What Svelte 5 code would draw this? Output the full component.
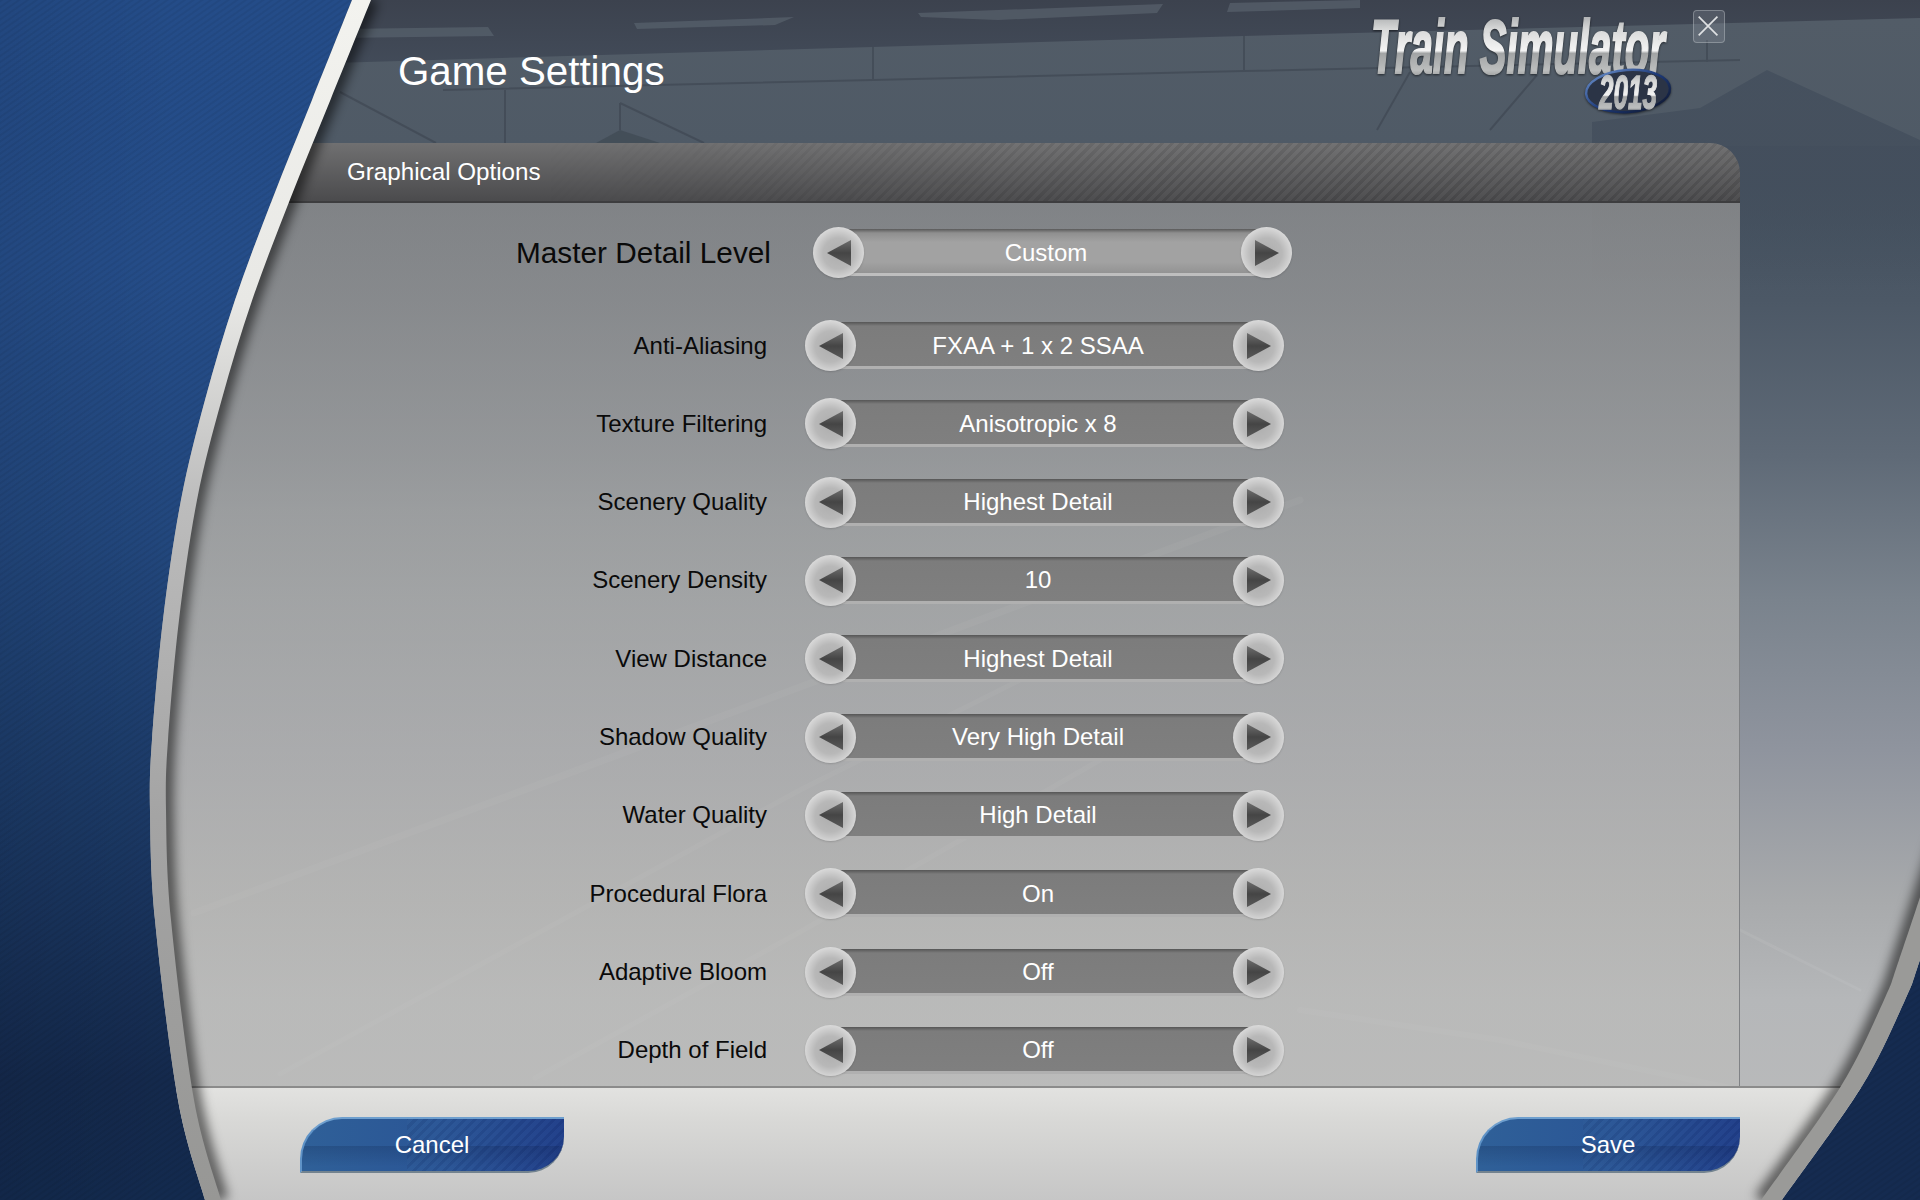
<script>
  const rows = [
    ['Anti-Aliasing', 'FXAA + 1 x 2 SSAA'],
    ['Texture Filtering', 'Anisotropic x 8'],
    ['Scenery Quality', 'Highest Detail'],
    ['Scenery Density', '10'],
    ['View Distance', 'Highest Detail'],
    ['Shadow Quality', 'Very High Detail'],
    ['Water Quality', 'High Detail'],
    ['Procedural Flora', 'On'],
    ['Adaptive Bloom', 'Off'],
    ['Depth of Field', 'Off']
  ];

  // Smooth curve through points (Catmull-Rom to Bezier)
  function curve(p) {
    let d = '';
    for (let i = 0; i < p.length - 1; i++) {
      const a = p[Math.max(i - 1, 0)], b = p[i], c = p[i + 1], e = p[Math.min(i + 2, p.length - 1)];
      const c1 = [b[0] + (c[0] - a[0]) / 6, b[1] + (c[1] - a[1]) / 6];
      const c2 = [c[0] - (e[0] - b[0]) / 6, c[1] - (e[1] - b[1]) / 6];
      d += `C${c1[0].toFixed(1)} ${c1[1].toFixed(1)} ${c2[0].toFixed(1)} ${c2[1].toFixed(1)} ${c[0]} ${c[1]}`;
    }
    return d;
  }
  const leftOuter = [[352,0],[312,100],[272,200],[235,300],[205,400],[181,500],[163,620],[152,740],[150,810],[155,920],[178,1100],[205,1200]];
  const leftInner = leftOuter.map(([x, y]) => [x + 19 - 3 * Math.min(y / 500, 1), y]);
  const rightOuter = [[1960,840],[1920,960],[1905,1000],[1862,1086],[1782,1200]];
  const rightInner = rightOuter.map(([x, y]) => [x - 21, y]);
  const start = (p) => `M${p[0][0]} ${p[0][1]}`;
  const rev = (p) => [...p].reverse();

  const blueLeft = `${start(leftOuter)}${curve(leftOuter)}L0 1200L0 0Z`;
  const blueRight = `${start(rightOuter)}${curve(rightOuter)}L1960 1200Z`;
  const bandLeft = `${start(leftOuter)}${curve(leftOuter)}L${rev(leftInner)[0].join(' ')}${curve(rev(leftInner))}Z`;
  const bandRight = `${start(rightOuter)}${curve(rightOuter)}L${rev(rightInner)[0].join(' ')}${curve(rev(rightInner))}Z`;
  const shadeLeft = `${start(leftInner)}${curve(leftInner)}`;
  const shadeRight = `${start(rightInner)}${curve(rightInner)}`;
</script>

<div class="screen">
  <!-- ghosted station photograph behind the panel -->
  <svg class="layer backdrop" viewBox="0 0 1920 1200" aria-hidden="true">
    <defs>
      <linearGradient id="sky" x1="0" y1="0" x2="0" y2="1">
        <stop offset="0" stop-color="#3c424e" />
        <stop offset="0.09" stop-color="#465160" />
        <stop offset="0.17" stop-color="#455260" />
        <stop offset="0.25" stop-color="#4c5866" />
        <stop offset="0.38" stop-color="#5f6a77" />
        <stop offset="0.5" stop-color="#7a838d" />
        <stop offset="0.625" stop-color="#8f949e" />
        <stop offset="0.75" stop-color="#a8aaac" />
        <stop offset="0.833" stop-color="#b5b7b9" />
        <stop offset="1" stop-color="#bcbcbc" />
      </linearGradient>
      <linearGradient id="house" x1="0" y1="0" x2="0" y2="1">
        <stop offset="0" stop-color="#434e5c" />
        <stop offset="0.5" stop-color="#434e5c" />
        <stop offset="1" stop-color="#434e5c" stop-opacity="0" />
      </linearGradient>
      <linearGradient id="wall" x1="0" y1="0" x2="0" y2="1">
        <stop offset="0" stop-color="#525c67" />
        <stop offset="1" stop-color="#4f5a66" />
      </linearGradient>
    </defs>
    <rect width="1920" height="1200" fill="url(#sky)" />
    <polygon points="300,64 873,47 1244,36 1920,18 1920,146 300,146" fill="url(#wall)" />
    <polygon points="1592,122 1700,108 1767,70 1920,140 1920,290 1592,290" fill="url(#house)" opacity="0.8" />
    <g fill="#59626d" opacity="0.7">
      <polygon points="634,23 794,17 775,25 637,29" />
      <polygon points="918,13 1163,4 1157,13 998,20 921,17" />
      <polygon points="1230,3 1360,0 1360,8 1227,12" />
      <polygon points="340,29 488,27 494,36 340,38" />
    </g>
    <polygon points="596,143 620,130 660,143" fill="#3f4853" opacity="0.7" />
    <g stroke="#343b46" stroke-width="2" fill="none" opacity="0.42">
      <path d="M443 90L873 80L1244 71L1740 60" />
      <path d="M873 47V80M1244 36V71M1707 40V62M505 90V143M620 103V130" />
      <path d="M620 103L704 143M340 92L436 143M1377 130L1410 72M1490 130L1537 75" />
    </g>
    <g stroke="#ffffff" fill="none" opacity="0.06" stroke-linecap="round">
      <path d="M194 913L800 687L1300 500" stroke-width="7" />
      <path d="M280 1074L800 790L1060 660" stroke-width="5" />
      <path d="M535 1078L800 932L1100 760" stroke-width="5" />
      <path d="M1300 1010L1500 1040L1740 1090" stroke-width="6" />
      <path d="M1740 930L1860 990" stroke-width="3" />
    </g>
  </svg>

  <div class="page">
    <header class="top">
      <h1>Game Settings</h1>
      <svg class="logo" viewBox="0 0 312 110" role="img" aria-label="Train Simulator 2013">
        <defs>
          <linearGradient id="chrome" x1="0" y1="0" x2="0" y2="1">
            <stop offset="0" stop-color="#8b8e90" />
            <stop offset="0.3" stop-color="#d8d9d9" />
            <stop offset="0.55" stop-color="#f4f4f4" />
            <stop offset="0.58" stop-color="#a2a4a5" />
            <stop offset="0.78" stop-color="#bcbebe" />
            <stop offset="1" stop-color="#5f6163" />
          </linearGradient>
          <linearGradient id="ring" x1="0" y1="0" x2="1" y2="1">
            <stop offset="0" stop-color="#6f95d0" />
            <stop offset="0.5" stop-color="#1d3a7a" />
            <stop offset="1" stop-color="#0e1426" />
          </linearGradient>
        </defs>
        <text class="logo-main" x="5" y="59" textLength="294" lengthAdjust="spacingAndGlyphs" fill="url(#chrome)" stroke="url(#chrome)">Train Simulator</text>
        <ellipse cx="262" cy="77" rx="42" ry="21" fill="#2b3446" stroke="url(#ring)" stroke-width="2.5" transform="rotate(-4 262 77)" />
        <text class="logo-year" x="233" y="95" textLength="58" lengthAdjust="spacingAndGlyphs" fill="url(#chrome)" stroke="url(#chrome)">2013</text>
      </svg>
      <button class="close" aria-label="Close">
        <svg viewBox="0 0 32 32" width="30" height="30"><path d="M5 5L25 25M25 5L5 25" stroke="#dfe1e3" stroke-width="1.8" fill="none" /></svg>
      </button>
    </header>

    <section class="settings">
      <div class="bar"><h2>Graphical Options</h2></div>
      <div class="panel">
        <div class="row master">
          <span class="label">Master Detail Level</span>
          <div class="picker">
            <button class="arrow" aria-label="Previous">
              <svg viewBox="0 0 24 26" width="24" height="26"><polygon points="0,13 24,0 24,26" fill="url(#tri)" /></svg>
            </button>
            <div class="track"><span>Custom</span></div>
            <button class="arrow" aria-label="Next">
              <svg viewBox="0 0 24 26" width="24" height="26"><polygon points="24,13 0,0 0,26" fill="url(#tri)" /></svg>
            </button>
          </div>
        </div>
        <div class="list">
          {#each rows as [label, value]}
            <div class="row">
              <span class="label">{label}</span>
              <div class="picker">
                <button class="arrow" aria-label="Previous">
                  <svg viewBox="0 0 24 26" width="24" height="26"><polygon points="0,13 24,0 24,26" fill="url(#tri)" /></svg>
                </button>
                <div class="track"><span>{value}</span></div>
                <button class="arrow" aria-label="Next">
                  <svg viewBox="0 0 24 26" width="24" height="26"><polygon points="24,13 0,0 0,26" fill="url(#tri)" /></svg>
                </button>
              </div>
            </div>
          {/each}
        </div>
      </div>
    </section>

    <footer class="bottom">
      <button class="action">Cancel</button>
      <button class="action">Save</button>
    </footer>
  </div>

  <!-- curved blue frame lying over the page -->
  <svg class="layer frame" viewBox="0 0 1920 1200" aria-hidden="true">
    <defs>
      <linearGradient id="tri" x1="0" y1="0" x2="0" y2="1">
        <stop offset="0" stop-color="#6e6e6e" />
        <stop offset="0.5" stop-color="#454545" />
        <stop offset="1" stop-color="#5a5a5a" />
      </linearGradient>
      <linearGradient id="blue" x1="0" y1="0" x2="0" y2="1">
        <stop offset="0" stop-color="#244c88" />
        <stop offset="0.22" stop-color="#254d89" />
        <stop offset="0.45" stop-color="#22477d" />
        <stop offset="0.68" stop-color="#1b3965" />
        <stop offset="0.9" stop-color="#14294c" />
        <stop offset="1" stop-color="#132a4e" />
      </linearGradient>
      <linearGradient id="blueSide" x1="0" y1="0" x2="1" y2="0">
        <stop offset="0" stop-color="#000" stop-opacity="0.07" />
        <stop offset="0.5" stop-color="#000" stop-opacity="0" />
      </linearGradient>
      <linearGradient id="band" gradientUnits="userSpaceOnUse" x1="0" y1="0" x2="0" y2="1200">
        <stop offset="0" stop-color="#f3f3ef" />
        <stop offset="0.25" stop-color="#e8e8e5" />
        <stop offset="0.42" stop-color="#bcbcbc" />
        <stop offset="0.68" stop-color="#a4a4a4" />
        <stop offset="1" stop-color="#979795" />
      </linearGradient>
      <pattern id="hatch" width="5" height="5" patternUnits="userSpaceOnUse" patternTransform="rotate(-35)">
        <rect width="5" height="2" fill="#000" opacity="0.055" />
      </pattern>
      <filter id="soft" x="-10%" y="-10%" width="120%" height="120%">
        <feGaussianBlur stdDeviation="6" />
      </filter>
    </defs>
    <g filter="url(#soft)" fill="none" stroke="#000" stroke-opacity="0.6" stroke-width="14">
      <path d={shadeLeft} />
      <path d={shadeRight} />
    </g>
    <path d={blueLeft} fill="url(#blue)" />
    <path d={blueLeft} fill="url(#blueSide)" />
    <path d={blueLeft} fill="url(#hatch)" />
    <path d={blueRight} fill="#152b50" />
    <path d={blueRight} fill="url(#hatch)" />
    <path d={bandLeft} fill="url(#band)" />
    <path d={bandRight} fill="#9a9a98" />
  </svg>
</div>

<style>
  :global(body) {
    margin: 0;
    background: #000;
  }
  .screen {
    position: relative;
    width: 1920px;
    height: 1200px;
    overflow: hidden;
    font-family: "Liberation Sans", Arial, sans-serif;
  }
  .layer {
    position: absolute;
    inset: 0;
    width: 1920px;
    height: 1200px;
    display: block;
  }
  .frame {
    pointer-events: none;
  }
  .page {
    position: relative;
    display: flex;
    flex-direction: column;
    height: 1200px;
  }
  .top {
    display: flex;
    align-items: flex-start;
    height: 143px;
    padding: 0 195px 0 398px;
    box-sizing: border-box;
    flex: none;
  }
  h1 {
    margin: 49px auto 0 0;
    font-size: 40.3px;
    line-height: 46px;
    font-weight: 400;
    color: #fff;
  }
  .logo {
    width: 312px;
    height: 110px;
    margin-top: 14px;
    overflow: visible;
    filter: drop-shadow(0 1px 1px rgba(0, 0, 0, 0.55));
  }
  .logo-main {
    font: italic 700 76px "Liberation Sans", Arial, sans-serif;
    stroke-width: 2.2px;
  }
  .logo-year {
    font: italic 700 48px "Liberation Sans", Arial, sans-serif;
    stroke-width: 1.4px;
  }
  .close {
    width: 32px;
    height: 33px;
    margin: 10px 0 0 15px;
    padding: 0;
    flex: none;
    box-sizing: border-box;
    display: flex;
    align-items: center;
    justify-content: center;
    background: rgba(170, 176, 184, 0.2);
    border: 1px solid rgba(190, 195, 200, 0.42);
    border-radius: 4px;
  }
  .settings {
    margin-left: 130px;
    width: 1610px;
    flex: none;
  }
  .bar {
    position: relative;
    height: 60px;
    box-sizing: border-box;
    border-top-right-radius: 30px;
    border-bottom: 2px solid #3d3d3f;
    background: linear-gradient(#707071, #4b4b4d);
    overflow: hidden;
  }
  .bar::after {
    content: "";
    position: absolute;
    inset: 0;
    background: repeating-linear-gradient(-45deg, rgba(0, 0, 0, 0.07) 0 3px, rgba(255, 255, 255, 0.02) 3px 7px);
    -webkit-mask-image: linear-gradient(to right, transparent 25%, #000 65%);
    mask-image: linear-gradient(to right, transparent 25%, #000 65%);
  }
  h2 {
    margin: 0;
    padding-left: 217px;
    font-size: 24.2px;
    line-height: 58px;
    font-weight: 400;
    color: #fff;
  }
  .panel {
    height: 883px;
    box-sizing: border-box;
    padding-top: 24px;
    border-right: 1px solid #808285;
    background: linear-gradient(rgba(168, 164, 160, 0.6), rgba(188, 185, 180, 0.6) 35%, rgba(188, 188, 186, 0.6));
  }
  .row {
    display: grid;
    grid-template-columns: 637px 479px;
    column-gap: 38px;
    align-items: center;
    height: 51px;
  }
  .row.master {
    grid-template-columns: 641px 479px;
    column-gap: 42px;
  }
  .label {
    text-align: right;
    font-size: 24px;
    color: #0a0a0a;
  }
  .master .label {
    font-size: 29.8px;
  }
  .list {
    display: flex;
    flex-direction: column;
    gap: 27.33px;
    margin-top: 42px;
  }
  .picker {
    display: flex;
    align-items: center;
    height: 51px;
  }
  .arrow {
    position: relative;
    z-index: 1;
    flex: none;
    width: 51px;
    height: 51px;
    padding: 0;
    border: 0;
    border-radius: 50%;
    display: flex;
    align-items: center;
    justify-content: center;
    background: radial-gradient(circle at 50% 52%, #adadad 0, #b8b8b8 42%, #dadada 72%, #f6f6f6 92%, #d6d6d6 100%);
    box-shadow: 0 1px 2px rgba(0, 0, 0, 0.15);
  }
  .track {
    flex: 1;
    margin: 0 -25px;
    height: 47px;
    box-sizing: border-box;
    border-bottom: 3px solid #b0b0b0;
    background: linear-gradient(#565656, #7c7c7c 4px, #7f7f7f);
    display: flex;
    align-items: center;
    justify-content: center;
    color: #fff;
    font-size: 24px;
    padding: 3px 13px 0 0;
  }
  .master .track {
    background: linear-gradient(#5a5a5a, #8f8f8f 4px, #a2a2a2 30%, #a2a2a2 75%, #939393);
    border-bottom-color: #bebebe;
  }
  .bottom {
    flex: 1;
    display: flex;
    justify-content: space-between;
    align-items: flex-start;
    padding: 29px 180px 0 300px;
    border-top: 2px solid #8b8b8b;
    background: linear-gradient(#e2e2e0, #d8d8d6 30%, #c6c6c6);
  }
  .action {
    position: relative;
    width: 264px;
    height: 56px;
    padding: 0 2px 0 0;
    box-sizing: border-box;
    border: 0;
    border-top: 2px solid #6e9fce;
    border-left: 2px solid #5f93c7;
    border-bottom: 2px solid #73838f;
    border-radius: 42px 0 36px 0;
    background:
      repeating-linear-gradient(-45deg, rgba(0, 0, 40, 0.07) 0 3px, rgba(255, 255, 255, 0.01) 3px 7px) right / 60% 100% no-repeat,
      linear-gradient(transparent 52%, rgba(0, 10, 40, 0.16) 52%, rgba(0, 10, 40, 0) 92%),
      linear-gradient(to right, #2f6098, #2a5596 55%, #203f8a);
    color: #fff;
    font: 24px "Liberation Sans", Arial, sans-serif;
  }
</style>
